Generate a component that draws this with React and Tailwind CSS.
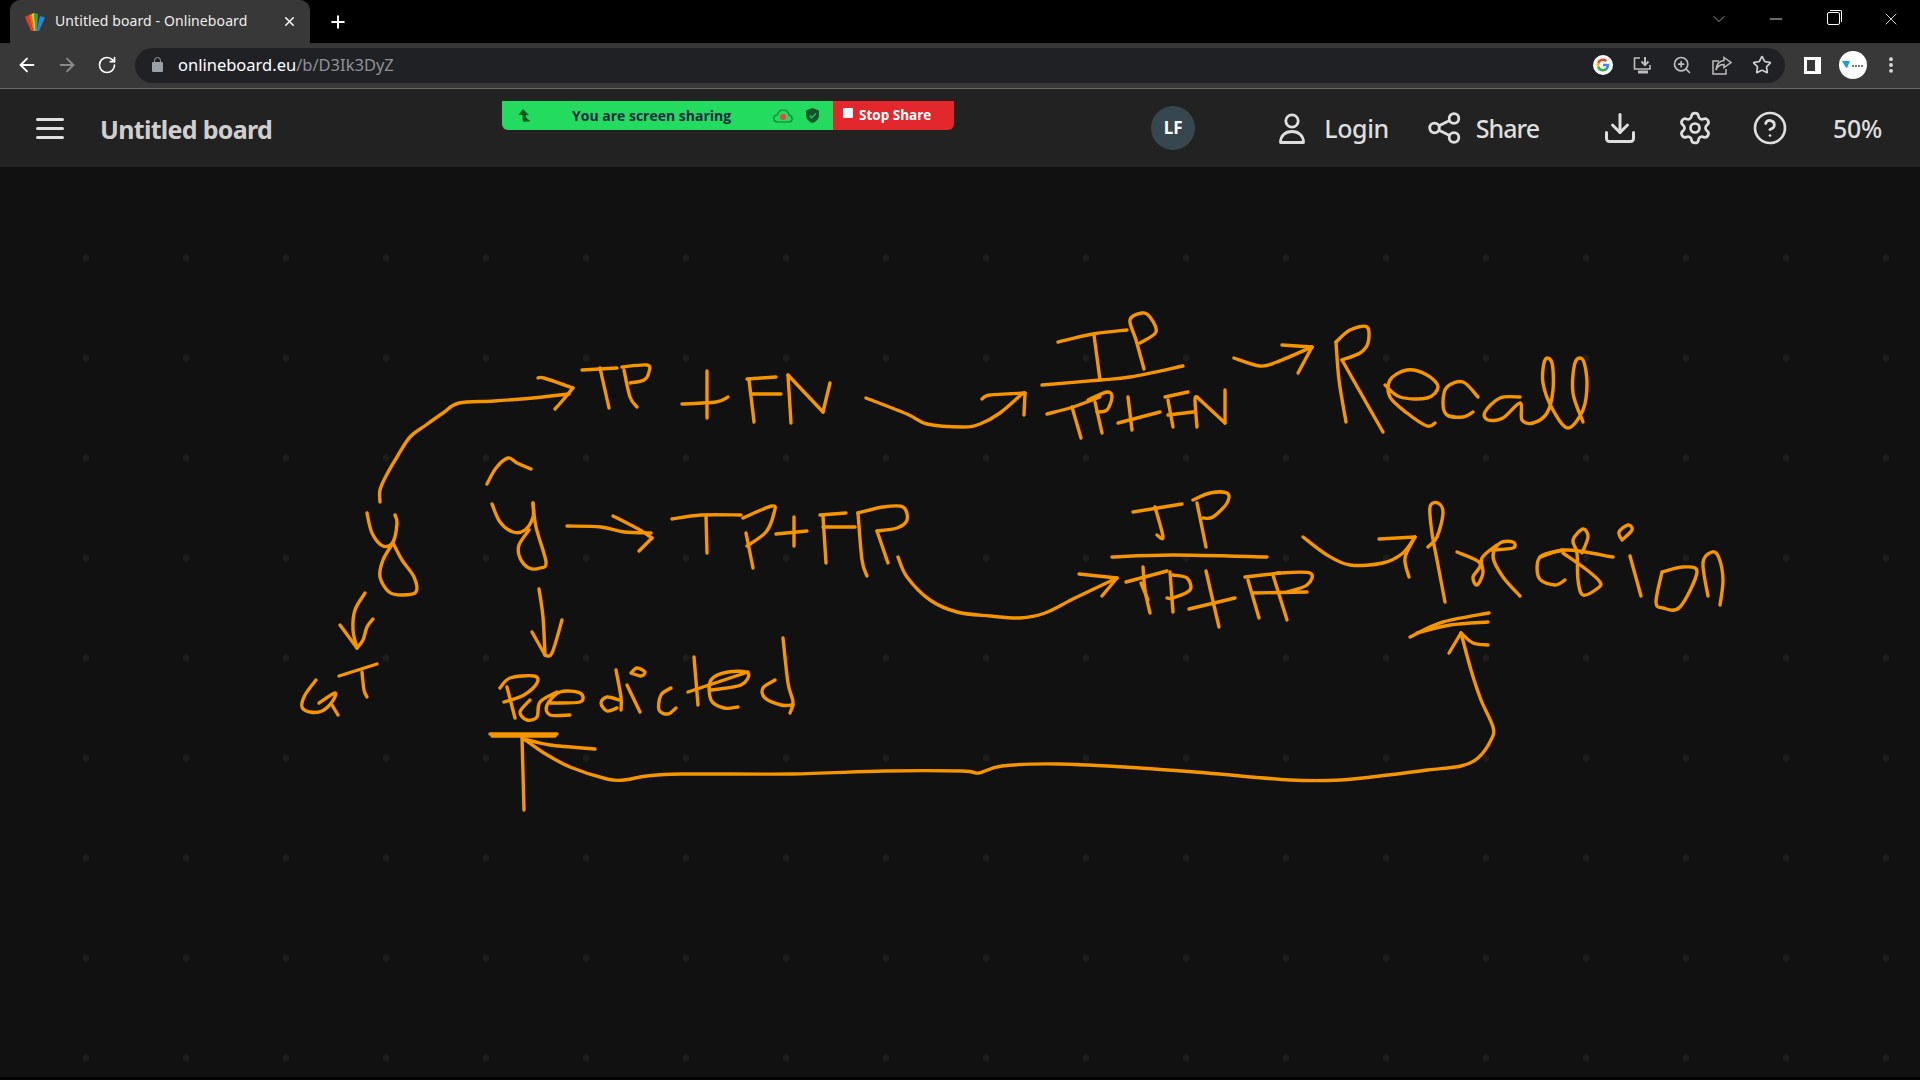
import React from 'react';
import { ArrowLeft, ArrowRight, RotateCw, Plus, X, ZoomIn, Star, MoreVertical, Minus, ChevronDown, Settings, CircleHelp, Download } from 'lucide-react';

// Hand-drawn strokes on the board, page coordinates
const strokes = [
    // y -> TP + FN
    [[380, 502], [380, 490], [386, 476], [397, 457], [410, 437], [426, 425], [443, 413], [459, 403], [494, 401], [533, 398], [569, 394]],
    [[538, 378], [544, 378], [573, 388]],
    [[573, 388], [563, 400], [555, 409]],
    [[582, 370], [617, 368]],
    [[600, 368], [609, 408]],
    [[622, 367], [647, 365], [649, 372], [644, 380], [630, 383]],
    [[624, 370], [630, 397], [637, 407]],
    [[682, 404], [716, 402], [728, 397]],
    [[707, 371], [707, 418]],
    [[747, 379], [776, 377]],
    [[749, 380], [753, 413], [754, 422]],
    [[751, 394], [781, 394]],
    [[791, 423], [788, 375]],
    [[788, 375], [823, 412]],
    [[823, 412], [830, 383]],
    // arrow to fraction
    [[866, 398], [907, 414], [927, 424], [963, 427], [980, 424], [1000, 413], [1023, 393]],
    [[982, 399], [990, 395], [1025, 393]],
    [[1025, 393], [1024, 415]],
    // TP / TP+FN
    [[1058, 342], [1093, 334], [1127, 330]],
    [[1094, 335], [1100, 380]],
    [[1144, 369], [1136, 340], [1130, 320], [1142, 313], [1150, 317], [1156, 332], [1140, 343]],
    [[1042, 385], [1100, 380], [1130, 377], [1183, 366]],
    [[1047, 414], [1073, 407], [1100, 397]],
    [[1072, 407], [1081, 438]],
    [[1095, 402], [1102, 433]],
    [[1088, 400], [1107, 392], [1112, 397], [1107, 410], [1097, 412]],
    [[1118, 423], [1160, 412]],
    [[1128, 397], [1132, 430]],
    [[1165, 397], [1188, 392]],
    [[1168, 400], [1173, 427]],
    [[1168, 415], [1193, 412]],
    [[1197, 427], [1195, 400], [1197, 397]],
    [[1197, 397], [1225, 423]],
    [[1225, 423], [1225, 390]],
    // arrow to Recall
    [[1234, 358], [1260, 366], [1277, 362], [1312, 347]],
    [[1282, 345], [1312, 347]],
    [[1312, 347], [1298, 373]],
    // Recall
    [[1346, 422], [1339, 380], [1336, 342]],
    [[1336, 342], [1350, 330], [1367, 327], [1368, 343], [1360, 353], [1342, 360]],
    [[1342, 360], [1363, 397], [1383, 432]],
    [[1385, 385], [1400, 397], [1427, 398], [1438, 387], [1427, 375], [1407, 370], [1390, 380], [1390, 397], [1407, 413], [1427, 426], [1435, 423]],
    [[1478, 397], [1463, 382], [1447, 387], [1443, 403], [1447, 415], [1463, 417], [1473, 412]],
    [[1520, 397], [1500, 398], [1485, 412], [1488, 420], [1503, 418], [1520, 403], [1522, 420], [1533, 423], [1547, 413], [1553, 390], [1552, 363], [1545, 360], [1543, 383], [1553, 410], [1568, 428], [1583, 410], [1587, 383], [1583, 360], [1575, 363], [1573, 393], [1583, 422]],
    // y
    [[367, 513], [372, 533], [383, 546], [393, 542], [397, 523], [395, 515]],
    [[393, 543], [402, 560], [414, 577], [416, 592], [402, 595], [389, 592], [380, 577], [383, 560], [393, 543]],
    // y hat -> TP+FP
    [[487, 484], [496, 468], [508, 458], [517, 463], [531, 469]],
    [[492, 504], [500, 522], [513, 532], [525, 530], [533, 517], [533, 503]],
    [[533, 503], [536, 527], [546, 562], [540, 568], [529, 568], [520, 558], [519, 545], [529, 530]],
    [[567, 526], [601, 527], [624, 532], [651, 533]],
    [[613, 516], [640, 530], [652, 538]],
    [[652, 538], [639, 551]],
    [[672, 519], [701, 515], [741, 515]],
    [[706, 515], [707, 553]],
    [[743, 518], [772, 506], [774, 513], [766, 532], [747, 546]],
    [[746, 533], [753, 568]],
    [[776, 534], [807, 531]],
    [[794, 517], [794, 546]],
    [[820, 515], [846, 513]],
    [[823, 516], [826, 563]],
    [[823, 527], [855, 527]],
    [[858, 513], [862, 560], [867, 576]],
    [[858, 513], [883, 507], [903, 507], [907, 520], [897, 528], [877, 531]],
    [[877, 531], [888, 563]],
    // arrow to fraction 2
    [[898, 557], [907, 577], [930, 600], [957, 612], [990, 616], [1020, 618], [1045, 613], [1075, 598], [1117, 578]],
    [[1079, 574], [1117, 578]],
    [[1117, 578], [1102, 596]],
    // TP / TP+FP
    [[1133, 512], [1182, 504]],
    [[1155, 507], [1163, 537], [1157, 535]],
    [[1197, 503], [1206, 547]],
    [[1193, 500], [1210, 493], [1227, 493], [1227, 503], [1213, 517], [1203, 518]],
    [[1112, 557], [1173, 555], [1267, 557]],
    [[1126, 582], [1167, 571]],
    [[1143, 567], [1145, 590], [1150, 613]],
    [[1141, 583], [1148, 600]],
    [[1170, 572], [1173, 612]],
    [[1173, 575], [1187, 578], [1190, 590], [1173, 598], [1167, 598]],
    [[1189, 609], [1235, 598]],
    [[1206, 571], [1219, 627]],
    [[1245, 577], [1280, 573]],
    [[1248, 580], [1259, 618]],
    [[1253, 593], [1307, 592]],
    [[1273, 575], [1287, 620]],
    [[1277, 573], [1310, 573], [1307, 585], [1287, 592]],
    // arrow to Precision
    [[1303, 537], [1327, 555], [1350, 565], [1383, 563], [1403, 553], [1415, 537]],
    [[1379, 539], [1415, 537]],
    [[1415, 537], [1405, 558], [1409, 577]],
    // Precision
    [[1445, 602], [1437, 560], [1432, 533], [1430, 507], [1438, 503], [1443, 513], [1437, 537], [1428, 547]],
    [[1457, 552], [1480, 563], [1473, 577], [1477, 585], [1483, 573], [1482, 558], [1497, 545]],
    [[1492, 550], [1513, 548], [1513, 542], [1500, 543], [1493, 557], [1503, 577], [1520, 596]],
    [[1563, 550], [1540, 557], [1539, 578], [1555, 585], [1565, 580]],
    [[1540, 557], [1567, 550], [1613, 557]],
    [[1563, 553], [1587, 570], [1600, 582], [1598, 588], [1583, 595], [1578, 580], [1577, 553], [1573, 540], [1583, 529], [1588, 537], [1582, 553]],
    [[1630, 556], [1641, 596]],
    [[1622, 540], [1619, 532], [1628, 525], [1632, 530], [1622, 540]],
    [[1662, 572], [1656, 602], [1663, 608], [1680, 607], [1697, 572], [1683, 567], [1662, 572]],
    [[1708, 596], [1703, 563], [1712, 552], [1719, 558], [1723, 580], [1720, 605]],
    [[1410, 637], [1443, 622], [1489, 613]],
    [[1417, 633], [1450, 625], [1488, 622]],
    // long arrow along the bottom
    [[1461, 633], [1471, 670], [1481, 700], [1493, 727], [1491, 740], [1478, 758], [1461, 766], [1428, 770], [1388, 775], [1341, 780], [1290, 780], [1207, 773], [1140, 768], [1059, 764], [1002, 766], [979, 773], [962, 771], [885, 771], [791, 774], [681, 774], [647, 776], [624, 780], [607, 779], [570, 767], [544, 753], [524, 739]],
    [[1449, 653], [1461, 633]],
    [[1461, 633], [1473, 643], [1488, 645]],
    [[524, 739], [550, 745], [595, 749]],
    [[522, 737], [524, 810]],
    [[490, 734], [557, 734]],
    [[492, 736], [555, 736]],
    // y hat down arrow
    [[539, 589], [543, 617], [545, 655]],
    [[532, 632], [545, 655]],
    [[545, 655], [552, 653], [562, 620]],
    // Predicted
    [[500, 688], [510, 678], [534, 676], [537, 683], [524, 695], [504, 702]],
    [[507, 687], [515, 718]],
    [[530, 700], [520, 712], [527, 720], [537, 717], [540, 702], [557, 692]],
    [[550, 703], [580, 702], [580, 693], [560, 692], [547, 705], [550, 715], [570, 715]],
    [[616, 670], [621, 697], [621, 710]],
    [[619, 700], [607, 697], [601, 703], [607, 711], [617, 708]],
    [[627, 685], [640, 712]],
    [[631, 673], [637, 668], [645, 672], [641, 676], [631, 673]],
    [[671, 688], [661, 695], [659, 710], [668, 714], [676, 708]],
    [[688, 692], [748, 672]],
    [[694, 657], [698, 705]],
    [[711, 690], [741, 685], [748, 673], [728, 672], [711, 680], [711, 700], [724, 708], [738, 707]],
    [[775, 680], [763, 688], [765, 698], [781, 705], [793, 705]],
    [[783, 638], [788, 683], [793, 702], [790, 713]],
    // y -> GT
    [[365, 593], [355, 610], [353, 630], [357, 648]],
    [[340, 625], [357, 648]],
    [[357, 648], [363, 640], [367, 627], [373, 619]],
    [[316, 680], [305, 695], [302, 707], [310, 712], [322, 711], [332, 702], [335, 693], [319, 703]],
    [[332, 705], [338, 715]],
    [[339, 676], [377, 664]],
    [[362, 672], [364, 690], [367, 697]],
];

// catmull-rom through the points so the ink looks smooth
const toPath = (pts) => {
    let d = `M${pts[0][0]} ${pts[0][1]}`;
    for (let i = 0; i < pts.length - 1; i++) {
        const p0 = pts[i - 1] || pts[i];
        const p1 = pts[i];
        const p2 = pts[i + 1];
        const p3 = pts[i + 2] || p2;
        const c1x = p1[0] + (p2[0] - p0[0]) / 6;
        const c1y = p1[1] + (p2[1] - p0[1]) / 6;
        const c2x = p2[0] - (p3[0] - p1[0]) / 6;
        const c2y = p2[1] - (p3[1] - p1[1]) / 6;
        d += ` C${c1x} ${c1y} ${c2x} ${c2y} ${p2[0]} ${p2[1]}`;
    }
    return d;
};

const Favicon = () => (
    <svg width="20" height="18" viewBox="0 0 20 18">
        <path d="M0 4 L4 2 L8 18 L6 18 Z" fill="#e53935" />
        <path d="M4 2 L7 1 L10 18 L8 18 Z" fill="#ef6c00" />
        <path d="M6.500 1 L9 0 L11 18 L9.500 18 Z" fill="#fbc02d" />
        <path d="M9 0 L13 1 L12 18 L10.500 18 Z" fill="#43a047" />
        <path d="M15 3 L20 4.500 L14 18 L11.500 18 Z" fill="#1e88e5" />
    </svg>
);

const GoogleG = () => (
    <div className="w-[20px] h-[20px] rounded-full bg-white flex items-center justify-center">
        <svg width="14" height="14" viewBox="0 0 48 48">
            <path fill="#4285F4" d="M45 24.5c0-1.6-.1-3.100-.4-4.500H24v8.500h11.800c-.5 2.700-2.100 5-4.400 6.600v5.500h7.100C42.600 36.800 45 31.200 45 24.500z" />
            <path fill="#34A853" d="M24 46c5.900 0 10.900-2 14.500-5.300l-7.100-5.500c-2 1.300-4.500 2.100-7.400 2.100-5.700 0-10.500-3.800-12.300-9H4.400v5.700C8 41.100 15.400 46 24 46z" />
            <path fill="#FBBC05" d="M11.700 28.300c-.4-1.300-.7-2.800-.7-4.300s.3-3 .7-4.300V14H4.400C2.900 17 2 20.400 2 24s.9 7 2.400 10z" />
            <path fill="#EA4335" d="M24 10.700c3.200 0 6.100 1.100 8.400 3.300l6.300-6.300C34.900 4.100 29.900 2 24 2 15.400 2 8 6.900 4.400 14l7.300 5.700c1.800-5.200 6.600-9 12.300-9z" />
        </svg>
    </div>
);

const InstallIcon = () => (
    <svg width="19" height="19" viewBox="0 0 19 19" fill="none" stroke="#bdbdbd" strokeWidth="1.6">
        <path d="M7 2 H1.500 V13 H17 V9" />
        <path d="M12 1 V8.500 M8.500 5.500 L12 9 L15.500 5.500" strokeWidth="2" />
        <path d="M5 16 H15" strokeWidth="3" />
    </svg>
);

const ShareOutIcon = () => (
    <svg width="20" height="19" viewBox="0 0 20 19" fill="none" stroke="#bdbdbd" strokeWidth="1.5">
        <path d="M7 5 H1 V18 H14 V13" />
        <path d="M12 1.500 L19 6.500 L12 11.500 V8.500 C8 8.500 5.500 10 4 14 C4.500 8.500 7.500 5 12 4.500 Z" />
    </svg>
);

const ZoomBarArrow = () => (
    <svg width="13" height="13" viewBox="0 0 13 13">
        <path d="M5 0 L11 6 L8 6 C8 9 9 10 12 11.500 L12 12.500 L5 12.500 C4.500 10 4.500 8 4.500 6 L0.500 6 Z" fill="#0b5a1e" />
    </svg>
);

const CloudRec = () => (
    <svg width="20" height="14" viewBox="0 0 20 14">
        <path d="M5 13 C1.500 13 .5 11 .8 9 C1 7 3 6 4.500 6 C5 3 7.500 1 10.500 1 C13.500 1 15.500 3 16 6 C18 6.500 19.300 8 19.200 10 C19 12 17.500 13 15.500 13 Z" fill="none" stroke="#0f7a2c" strokeWidth="1.200" />
        <circle cx="10" cy="8" r="3" fill="#ef4444" />
    </svg>
);

const ShieldCheck = () => (
    <svg width="13" height="15" viewBox="0 0 13 15">
        <path d="M6.500 0 L13 2.500 V7 C13 11 10 13.800 6.500 15 C3 13.800 0 11 0 7 V2.500 Z" fill="#14532d" />
        <path d="M3.500 7.500 L5.800 9.800 L9.800 5.500" fill="none" stroke="#22c55e" strokeWidth="1.300" />
    </svg>
);

const PersonIcon = () => (
    <svg width="26" height="31" viewBox="0 0 26 31" fill="none" stroke="#dedede" strokeWidth="2.800">
        <circle cx="13" cy="8" r="6.200" />
        <path d="M1.500 29.500 C1.500 23 6 18.500 13 18.500 C20 18.500 24.500 23 24.500 29.500 Z" strokeLinejoin="round" />
    </svg>
);

const ShareIcon = () => (
    <svg width="33" height="32" viewBox="0 0 33 32" fill="none" stroke="#dedede" strokeWidth="2.800">
        <circle cx="6.500" cy="16" r="4.800" />
        <circle cx="26" cy="6.500" r="4.800" />
        <circle cx="26" cy="25.500" r="4.800" />
        <path d="M11 13.800 L21.600 8.600 M11 18.200 L21.600 23.400" />
    </svg>
);

const App = () => {
    return (
        <div className="w-[1920px] h-[1080px] bg-black flex flex-col overflow-hidden font-['Roboto',sans-serif]">
            {/* Tab strip */}
            <div className="h-[43px] flex items-end shrink-0">
                <div className="ml-[10px] w-[300px] h-[43px] bg-[#383838] rounded-t-[10px] flex items-center pl-[15px] pr-[13px] relative">
                    <Favicon />
                    <span className="ml-[10px] text-[14px] text-[#eeeeee] whitespace-nowrap font-['Noto_Sans',sans-serif] tracking-[0.1px] -translate-y-[1px]">Untitled board - Onlineboard</span>
                    <X className="ml-auto w-[15px] h-[15px] text-white" strokeWidth={2.4} />
                </div>
                <Plus className="ml-[18px] mb-[11px] w-[20px] h-[20px] text-white" strokeWidth={2.4} />
                <div className="ml-auto flex items-center h-[43px] pb-[6px]">
                    <ChevronDown className="w-[20px] h-[20px] text-[#bbbbbb]" strokeWidth={1} />
                    <Minus className="ml-[37px] w-[20px] h-[20px] text-white" strokeWidth={1} />
                    <div className="ml-[41px] w-[13px] h-[13px] border border-white rounded-[2px] relative">
                        <div className="absolute -top-[3px] -right-[3px] w-[12px] h-[12px] border-t border-r border-white rounded-tr-[2px]"></div>
                    </div>
                    <X className="ml-[41px] mr-[19px] w-[20px] h-[20px] text-white" strokeWidth={1} />
                </div>
            </div>

            {/* Toolbar */}
            <div className="h-[46px] bg-[#383838] border-b border-[#6a6a6a] flex items-center shrink-0 pb-[1px]">
                <ArrowLeft className="ml-[16px] w-[22px] h-[22px] text-white" strokeWidth={2} />
                <ArrowRight className="ml-[18px] w-[22px] h-[22px] text-[#8a8a8a]" strokeWidth={2} />
                <RotateCw className="ml-[19px] w-[20px] h-[20px] text-white" strokeWidth={2} />
                <div className="ml-[18px] w-[1650px] h-[35px] bg-[#202124] rounded-full flex items-center pl-[17px] pr-[13px]">
                    <div className="w-[11px] h-[10px] bg-[#9aa0a6] rounded-[1px] relative mt-[4px]">
                        <div className="absolute -top-[5px] left-[2px] w-[7px] h-[7px] border-[1.5px] border-[#9aa0a6] rounded-t-full"></div>
                    </div>
                    <span className="ml-[15px] text-[16.5px] whitespace-nowrap font-['Noto_Sans',sans-serif]">
                        <span className="text-white">onlineboard.eu</span>
                        <span className="text-[#8f9296]">/b/D3Ik3DyZ</span>
                    </span>
                    <div className="ml-auto flex items-center gap-[20px]">
                        <GoogleG />
                        <InstallIcon />
                        <ZoomIn className="w-[20px] h-[20px] text-[#bdbdbd]" strokeWidth={2} />
                        <ShareOutIcon />
                        <Star className="w-[20px] h-[20px] text-[#d0d0d0]" strokeWidth={2} />
                    </div>
                </div>
                <div className="ml-[19px] w-[17px] h-[17px] bg-[#383838] border-[3px] border-r-[6px] border-white"></div>
                <div className="ml-[18px] w-[28px] h-[28px] rounded-full bg-white flex items-center justify-center">
                    <svg width="22" height="10" viewBox="0 0 22 10">
                        <path d="M0 1 L8 1 L5 8 L3.500 7 Z" fill="#1aa0c8" />
                        <path d="M10 6 H21" stroke="#777" strokeWidth="2" strokeDasharray="2 1" />
                    </svg>
                </div>
                <MoreVertical className="ml-[14px] w-[20px] h-[20px] text-[#e0e0e0]" strokeWidth={2.6} />
            </div>

            {/* App header */}
            <div className="h-[78px] bg-[#222222] relative flex items-center pl-[36px] shrink-0 font-['Noto_Sans',sans-serif]">
                <div className="flex flex-col gap-[6px]">
                    <div className="w-[28px] h-[3px] bg-[#e0e0e0] rounded-full"></div>
                    <div className="w-[28px] h-[3px] bg-[#e0e0e0] rounded-full"></div>
                    <div className="w-[28px] h-[3px] bg-[#e0e0e0] rounded-full"></div>
                </div>
                <span className="ml-[36px] text-[25px] font-bold text-[#cfcfcf] whitespace-nowrap tracking-[-0.7px] translate-y-[2px]">Untitled board</span>

                {/* Screen share banner floats over the header */}
                <div className="absolute left-[502px] top-[12px] h-[29px] w-[452px] flex rounded-b-[6px] overflow-hidden font-['Open_Sans',sans-serif]">
                    <div className="w-[331px] bg-[#22db5f] flex items-center pl-[16px]">
                        <ZoomBarArrow />
                        <span className="ml-[41px] text-[14px] font-bold text-[#1e2a44] whitespace-nowrap">You are screen sharing</span>
                        <div className="ml-auto mr-[14px] flex items-center gap-[13px]">
                            <CloudRec />
                            <ShieldCheck />
                        </div>
                    </div>
                    <div className="flex-1 bg-[#e2282d] flex items-center pl-[10px]">
                        <div className="w-[10px] h-[10px] bg-[#eaf8ff] rounded-[1px] -translate-y-[3px]"></div>
                        <span className="ml-[6px] text-[13.5px] font-bold text-white whitespace-nowrap">Stop Share</span>
                    </div>
                </div>

                <div className="ml-auto flex items-center text-[#dedede] text-[25px] pr-[38px]">
                    <div className="w-[44px] h-[44px] rounded-full bg-[#37474f] flex items-center justify-center text-[17px] font-bold text-white">LF</div>
                    <div className="ml-[84px]"><PersonIcon /></div>
                    <span className="ml-[19px] font-medium tracking-[-0.4px] translate-y-[1px]">Login</span>
                    <div className="ml-[39px]"><ShareIcon /></div>
                    <span className="ml-[15px] font-medium tracking-[-1px] translate-y-[1px]">Share</span>
                    <Download className="ml-[63px] w-[36px] h-[36px]" strokeWidth={2} />
                    <Settings className="ml-[39px] w-[36px] h-[36px]" strokeWidth={1.8} />
                    <CircleHelp className="ml-[39px] w-[36px] h-[36px]" strokeWidth={1.8} />
                    <span className="ml-[45px] font-medium tracking-[-0.3px] translate-y-[1px]">50%</span>
                </div>
            </div>

            {/* Board */}
            <div className="h-[910px] shrink-0 bg-[#111111] relative bg-[radial-gradient(circle,#1d1d1d_2.500px,transparent_4px)] bg-[size:100px_100px] bg-[position:36px_41px]">
                <svg className="absolute inset-0" width="1920" height="910" viewBox="0 167 1920 910" fill="none" stroke="#f59500" strokeWidth="3.400" strokeLinecap="round" strokeLinejoin="round">
                    {strokes.map((pts, i) => (
                        <path key={i} d={toPath(pts)} />
                    ))}
                </svg>
            </div>
        </div>
    );
};

export default App;
